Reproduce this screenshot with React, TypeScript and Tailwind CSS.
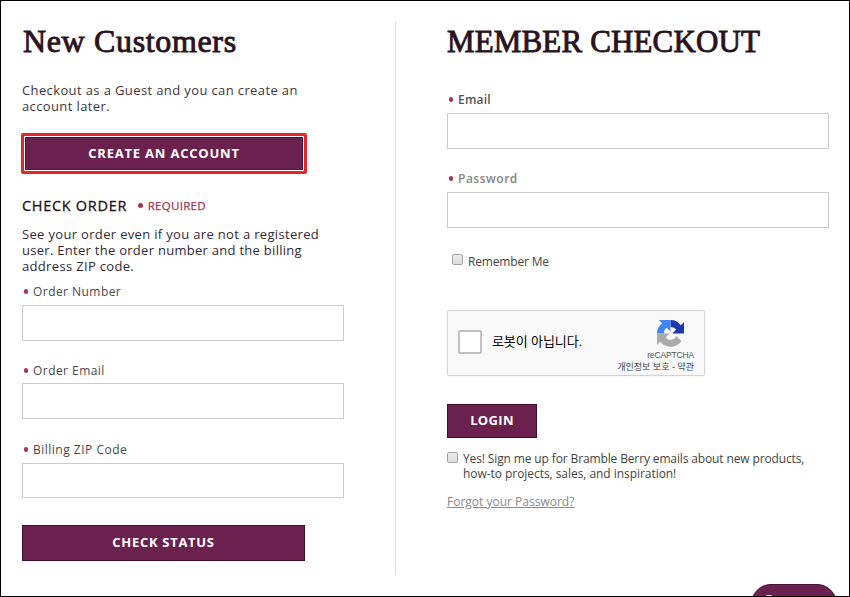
import type { ReactNode } from "react"

function Heading({ children, className }: { children: ReactNode; className: string }) {
  return (
    <h2 className={`h-10 whitespace-nowrap font-['Liberation_Serif',serif] leading-10 text-[#2a1220] [-webkit-text-stroke:0.9px_#2a1220] ${className}`}>
      {children}
    </h2>
  )
}

function Dot() {
  return <span className="mb-px size-[4.5px] shrink-0 rounded-full bg-[#a8324f]" />
}

function Field({ label, className, labelClass, inputClass }: { label: string; className?: string; labelClass: string; inputClass: string }) {
  return (
    <div className={className}>
      <label className="flex h-5 items-center gap-[5px] pl-[1.5px]">
        <Dot />
        <span className={`whitespace-nowrap leading-5 ${labelClass}`}>{label}</span>
      </label>
      <input className={`block w-full border border-[#cccccc] bg-white ${inputClass}`} />
    </div>
  )
}

function Checkbox({ className }: { className: string }) {
  return (
    <span className={`size-[11px] shrink-0 rounded-[2px] border border-[#a3a3a3] bg-linear-to-b from-[#ececec] to-[#dcdcdc] ${className}`} />
  )
}

function RecaptchaLogo() {
  return (
    <svg viewBox="0 0 64 64" className="h-[27px] w-[27px]">
      <path fill="#1c3aa9" d="M64 31.96V4.6l-7.56 7.56A31.93 31.93 0 0 0 31.9.1v16.4a15.7 15.7 0 0 1 13.7 6.3l-9.2 9.1z" />
      <path fill="#4285f4" d="M31.9.1H4.5l7.6 7.5A31.93 31.93 0 0 0 .1 32h16.4a15.7 15.7 0 0 1 6.3-13.6l9.1 9.1z" />
      <path fill="#ababab" d="M.1 32v27.4l7.5-7.6A32 32 0 0 0 32 63.9c10.6 0 20-5 26-13.3L45.6 38.1a15.6 15.6 0 0 1-13.6 9.3 15.1 15.1 0 0 1-11.4-6l8.9-9.4z" />
    </svg>
  )
}

function Recaptcha() {
  return (
    <div className="mt-[39px] flex h-[66px] w-[258px] rounded-[2px] border border-[#d3d3d3] bg-[#f9f9f9] pl-2.5 pr-2.5 shadow-[0_0_2px_rgba(0,0,0,0.08)] font-['Liberation_Sans','Noto_Sans_CJK_KR',sans-serif]">
      <span className="mt-[19px] size-6 shrink-0 rounded-[2px] border-2 border-[#c1c1c1] bg-white" />
      <span className="ml-2.5 mt-[21px] whitespace-nowrap text-[13px] leading-5 tracking-[-0.1px] text-black">로봇이 아닙니다.</span>
      <div className="ml-auto flex flex-col items-end">
        <div className="mr-2.5 mt-[9px]">
          <RecaptchaLogo />
        </div>
        <span className="mt-[3px] text-[8.5px] leading-[11px] tracking-[-0.15px] text-[#555555]">reCAPTCHA</span>
        <span className="whitespace-nowrap text-[9px] leading-[13px] text-[#444444]">개인정보 보호 - 약관</span>
      </div>
    </div>
  )
}

function NewCustomers() {
  return (
    <section className="w-[373px] shrink-0 pt-5">
      <Heading className="pl-px text-[32px] tracking-[0.65px]">New Customers</Heading>
      <p className="mt-[21px] whitespace-nowrap text-[13px] leading-4 tracking-[0.38px] text-[#3f3540]">
        Checkout as a Guest and you can create an
        <br />
        account later.
      </p>
      <div className="-ml-px mt-[19px] h-[41px] w-[286px] rounded-[2px] border-[3px] border-[#e0282b] p-px">
        <button className="block h-full w-full border border-[#4a1236] bg-[#6b214e] text-[13px] font-bold tracking-[0.8px] text-white">
          CREATE AN ACCOUNT
        </button>
      </div>
      <div className="mt-[22px] flex h-5 items-center">
        <h3 className="whitespace-nowrap text-[14.5px] leading-5 tracking-[0.7px] text-[#1d0f1a] [-webkit-text-stroke:0.3px_#1d0f1a]">CHECK ORDER</h3>
        <span className="ml-[11px] flex items-center gap-[5px]">
          <Dot />
          <span className="text-[11.5px] tracking-[0.3px] text-[#a03350] [-webkit-text-stroke:0.25px_#a03350]">REQUIRED</span>
        </span>
      </div>
      <p className="mt-2.5 whitespace-nowrap text-[13px] leading-4 tracking-[0.33px] text-[#33293a]">
        See your order even if you are not a registered
        <br />
        <span className="tracking-[0.28px]">user. Enter the order number and the billing</span>
        <br />
        address ZIP code.
      </p>
      <Field className="mt-2 w-[322px]" label="Order Number" labelClass="text-[12px] tracking-[0.45px] text-[#4a4a4a]" inputClass="mt-[3px] h-9" />
      <Field className="mt-5 w-[322px]" label="Order Email" labelClass="text-[12px] tracking-[0.45px] text-[#4a4a4a]" inputClass="mt-[2px] h-9" />
      <Field className="mt-[21px] w-[322px]" label="Billing ZIP Code" labelClass="text-[12px] tracking-[0.5px] text-[#4a4a4a]" inputClass="mt-[3px] h-[35px]" />
      <button className="mt-[27px] block h-9 w-[283px] border border-[#3f0c2c] bg-[#6b214e] text-[13px] font-bold tracking-[0.7px] text-white">
        CHECK STATUS
      </button>
    </section>
  )
}

function MemberCheckout() {
  return (
    <section className="ml-[51px] w-[382px] pt-[21px]">
      <Heading className="text-[31px] tracking-[0.15px]">MEMBER CHECKOUT</Heading>
      <Field className="mt-7" label="Email" labelClass="text-[12px] font-semibold tracking-[0.2px] text-[#555555]" inputClass="mt-[3px] h-9" />
      <Field className="mt-5" label="Password" labelClass="text-[12px] font-semibold tracking-[0.5px] text-[#858585]" inputClass="mt-[3px] h-9" />
      <label className="mt-[23px] flex h-5 pl-[5px]">
        <Checkbox className="mt-[3px]" />
        <span className="ml-[5px] mt-px text-[12px] leading-5 tracking-[-0.17px] text-[#444444]">Remember Me</span>
      </label>
      <Recaptcha />
      <button className="mt-7 block h-[34px] w-[90px] border border-[#3f0c2c] bg-[#6b214e] text-[13px] font-bold tracking-[0.35px] text-white">
        LOGIN
      </button>
      <label className="mt-[13px] flex h-[30px]">
        <Checkbox className="mt-px" />
        <span className="ml-[5px] whitespace-nowrap text-[12px] leading-[15px] tracking-[-0.13px] text-[#444444]">
          Yes! Sign me up for Bramble Berry emails about new products,
          <br />
          <span className="tracking-[-0.05px]">how-to projects, sales, and inspiration!</span>
        </span>
      </label>
      <a href="#" className="mt-[11px] block w-fit whitespace-nowrap text-[12px] leading-5 text-[#8a8a8a] underline">
        Forgot your Password?
      </a>
    </section>
  )
}

function ChatButton() {
  return (
    <div className="absolute left-[750px] top-[583px] h-10 w-[86px] rounded-full border border-[#4a1236] bg-[#6b214e]">
      <svg viewBox="0 0 16 16" className="ml-2.5 mt-2.5 size-3.5" fill="none" stroke="white" strokeWidth="2">
        <circle cx="8" cy="8" r="7" />
      </svg>
    </div>
  )
}

export default function App() {
  return (
    <div className="relative flex h-[597px] w-[850px] overflow-hidden border border-black bg-white pl-[21px] font-['Open_Sans','Noto_Sans',sans-serif]">
      <NewCustomers />
      <div className="mt-[21px] h-[553px] w-px shrink-0 bg-[#dedede]" />
      <MemberCheckout />
      <ChatButton />
    </div>
  )
}
